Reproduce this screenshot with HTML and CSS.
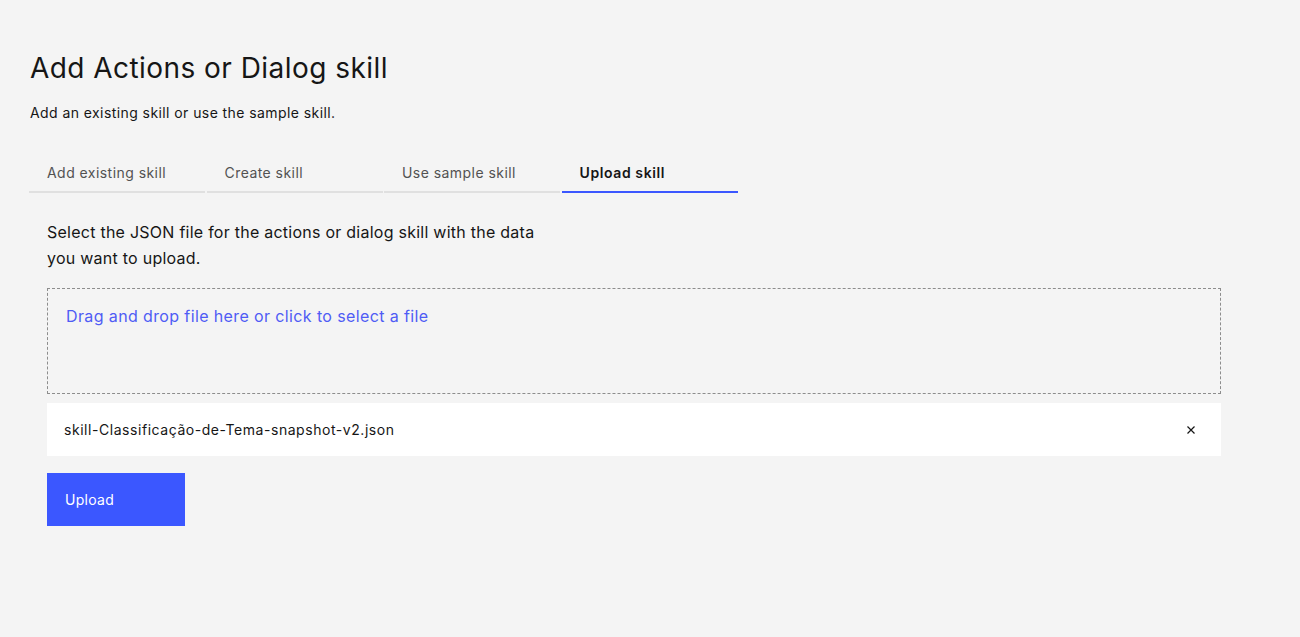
FILE: index.html
```html
<!DOCTYPE html>
<html lang="en">
<head>
<meta charset="utf-8">
<title>Add Actions or Dialog skill</title>
<link rel="stylesheet" href="styles.css">
</head>
<body>
<main class="page">
  <h1 class="title">Add Actions or Dialog skill</h1>
  <p class="subtitle">Add an existing skill or use the sample skill.</p>
  <nav class="tabs">
    <div class="tab">Add existing skill</div>
    <div class="tab">Create skill</div>
    <div class="tab">Use sample skill</div>
    <div class="tab tab-selected">Upload skill</div>
  </nav>
  <section class="panel">
    <p class="instructions">Select the JSON file for the actions or dialog skill with the data you want to upload.</p>
    <div class="dropzone">
      <span class="drop-link">Drag and drop file here or click to select a file</span>
    </div>
    <div class="file-row">
      <span class="file-name">skill-Classificação-de-Tema-snapshot-v2.json</span>
      <svg class="close-icon" width="16" height="16" viewBox="0 0 16 16" aria-hidden="true">
        <path d="M4.5 4.5 L11.5 11.5 M11.5 4.5 L4.5 11.5" stroke="#161616" stroke-width="1.2" fill="none"/>
      </svg>
    </div>
    <button class="upload-btn">Upload</button>
  </section>
</main>
</body>
</html>
```

FILE: styles.css
```css
html, body {
  margin: 0;
  padding: 0;
  background: #f4f4f4;
}
body {
  font-family: Inter, "Liberation Sans", sans-serif;
  color: #161616;
}
.page {
  padding: 50px 30px 0 30px;
}
.title {
  margin: 0;
  font-size: 28px;
  line-height: 36px;
  font-weight: 400;
  letter-spacing: 0.45px;
  color: #161616;
}
.subtitle {
  margin: 17px 0 0 0;
  font-size: 14px;
  line-height: 20px;
  letter-spacing: 0.42px;
  color: #161616;
}
.tabs {
  display: flex;
  gap: 1.5px;
  margin-top: 29px;
  margin-left: -1px;
}
.tab {
  width: 176px;
  box-sizing: border-box;
  padding: 12px 0 9px 18px;
  font-size: 14px;
  line-height: 18px;
  letter-spacing: 0.45px;
  color: #525252;
  border-bottom: 2px solid #e0e0e0;
}
.tab-selected {
  color: #161616;
  font-weight: 600;
  letter-spacing: 0.6px;
  border-bottom-color: #3b57ff;
}
.panel {
  padding: 26px 49px 0 17px;
}
.instructions {
  margin: 0;
  max-width: 510px;
  font-size: 16px;
  line-height: 26px;
  letter-spacing: 0.25px;
  color: #161616;
}
.dropzone {
  margin-top: 17px;
  height: 106px;
  box-sizing: border-box;
  border: 1px dashed #8d8d8d;
  padding: 15px 18px;
}
.drop-link {
  font-size: 16px;
  line-height: 24px;
  letter-spacing: 0.38px;
  color: #4f5cf5;
}
.file-row {
  margin-top: 9px;
  height: 53px;
  background: #ffffff;
  display: flex;
  align-items: center;
  justify-content: space-between;
  padding: 0 22px 0 17px;
}
.file-name {
  font-size: 14px;
  letter-spacing: 0.55px;
  color: #161616;
}
.close-icon {
  display: block;
}
.upload-btn {
  display: block;
  margin-top: 17px;
  width: 138px;
  height: 53px;
  border: none;
  background: #3b57ff;
  color: #ffffff;
  font-family: inherit;
  font-size: 14px;
  letter-spacing: 0.3px;
  text-align: left;
  padding: 0 0 0 18px;
}
```
